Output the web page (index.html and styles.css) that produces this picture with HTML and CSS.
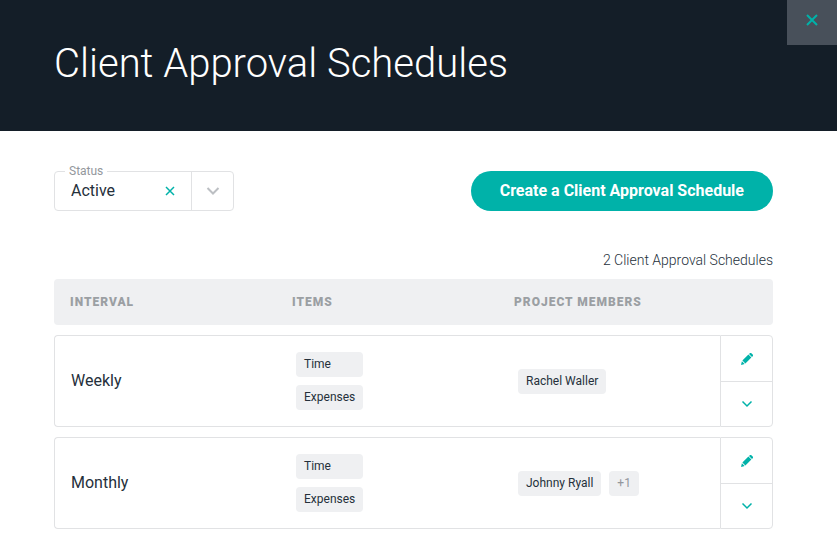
FILE: index.html
```
<!DOCTYPE html>
<html lang="en">
<head>
  <meta charset="utf-8">
  <title>Client Approval Schedules</title>
  <link rel="stylesheet" href="styles.css">
</head>
<body>
  <header class="page-header">
    <h1>Client Approval Schedules</h1>
    <button type="button" class="close" aria-label="Close">
      <svg width="12" height="12" viewBox="0 0 12 12"><path d="M1 1l10 10M11 1L1 11"/></svg>
    </button>
  </header>

  <main class="content">
    <div class="toolbar">
      <div class="filter">
        <label for="status">Status</label>
        <select id="status">
          <option>Active</option>
          <option>Inactive</option>
        </select>
        <button type="button" class="clear" aria-label="Clear status">
          <svg width="10" height="10" viewBox="0 0 10 10"><path d="M1 1l8 8M9 1L1 9"/></svg>
        </button>
        <span class="arrow">
          <svg width="14" height="8" viewBox="0 0 14 8"><path d="M1.500 1l5.500 5.500L12.500 1"/></svg>
        </span>
      </div>
      <button type="button" class="create">Create a Client Approval Schedule</button>
    </div>

    <p class="count">2 Client Approval Schedules</p>

    <table class="schedules">
      <thead>
        <tr>
          <th>Interval</th>
          <th>Items</th>
          <th>Project Members</th>
          <th class="actions-head"></th>
        </tr>
      </thead>
      <tbody>
        <tr>
          <td>Weekly</td>
          <td class="tags">
            <div class="stack">
              <span class="tag">Time</span>
              <span class="tag">Expenses</span>
            </div>
          </td>
          <td class="tags">
            <div class="line">
              <span class="tag">Rachel Waller</span>
            </div>
          </td>
          <td class="actions">
            <button type="button" aria-label="Edit Weekly">
              <svg class="pencil" width="12" height="12" viewBox="0 0 12 12"><path d="M8 1l.8-.7a1.200 1.200 0 0 1 1.600 0l1.300 1.300a1.200 1.200 0 0 1 0 1.600L11 4zM7.400 1.600l3 3-6 6-3-3zM.9 8.300l2.800 2.800L0 12z"/></svg>
            </button>
            <button type="button" aria-label="Expand Weekly">
              <svg class="chevron" width="12" height="8" viewBox="0 0 12 8"><path d="M1.500 1.500L6 6l4.500-4.500"/></svg>
            </button>
          </td>
        </tr>
        <tr>
          <td>Monthly</td>
          <td class="tags">
            <div class="stack">
              <span class="tag">Time</span>
              <span class="tag">Expenses</span>
            </div>
          </td>
          <td class="tags">
            <div class="line">
              <span class="tag">Johnny Ryall</span>
              <span class="tag more">+1</span>
            </div>
          </td>
          <td class="actions">
            <button type="button" aria-label="Edit Monthly">
              <svg class="pencil" width="12" height="12" viewBox="0 0 12 12"><path d="M8 1l.8-.7a1.200 1.200 0 0 1 1.600 0l1.300 1.300a1.200 1.200 0 0 1 0 1.600L11 4zM7.400 1.600l3 3-6 6-3-3zM.9 8.300l2.800 2.800L0 12z"/></svg>
            </button>
            <button type="button" aria-label="Expand Monthly">
              <svg class="chevron" width="12" height="8" viewBox="0 0 12 8"><path d="M1.500 1.500L6 6l4.500-4.500"/></svg>
            </button>
          </td>
        </tr>
      </tbody>
    </table>
  </main>
</body>
</html>
```
FILE: styles.css
```
* {
  box-sizing: border-box;
}

body {
  margin: 0;
  font-family: Roboto, sans-serif;
  font-size: 16px;
  color: #25303b;
  background: #ffffff;
}

button {
  border: 0;
  padding: 0;
  background: none;
  font-family: inherit;
  cursor: pointer;
}

svg {
  display: block;
  fill: none;
  stroke: #00b2a9;
  stroke-width: 2;
}

/* header */

.page-header {
  display: flex;
  justify-content: space-between;
  align-items: flex-start;
  padding-left: 54px;
  background: #141e28;
}

.page-header h1 {
  margin: 0;
  padding: 36px 0 39px;
  font-size: 40px;
  line-height: 56px;
  font-weight: 300;
  color: #ffffff;
}

.close {
  display: flex;
  align-items: center;
  justify-content: center;
  width: 50px;
  height: 45px;
  padding-bottom: 5px;
  background: #48505a;
}

/* filter and create button */

.content {
  padding: 40px 64px 24px 54px;
}

.toolbar {
  display: flex;
  justify-content: space-between;
}

.filter {
  position: relative;
  width: 180px;
  height: 40px;
}

.filter label {
  position: absolute;
  top: -8px;
  left: 11px;
  padding: 0 4px;
  font-size: 12px;
  line-height: 16px;
  color: #93979c;
  background: #ffffff;
}

.filter select {
  width: 100%;
  height: 100%;
  padding: 0 80px 2px 16px;
  border: 1px solid #e1e2e4;
  border-radius: 4px;
  appearance: none;
  background: #ffffff;
  font-family: inherit;
  font-size: 16px;
  color: #25303b;
}

.clear {
  position: absolute;
  top: 10px;
  right: 54px;
  padding: 5px;
}

.clear svg {
  stroke-width: 1.500;
}

.arrow {
  position: absolute;
  top: 1px;
  right: 1px;
  bottom: 1px;
  display: flex;
  align-items: center;
  justify-content: center;
  width: 42px;
  border-left: 1px solid #e1e2e4;
  pointer-events: none;
}

.arrow svg {
  stroke: #bcbfc3;
}

.create {
  height: 40px;
  padding: 0 29px 2px;
  border-radius: 20px;
  font-size: 16px;
  font-weight: 700;
  color: #ffffff;
  background: #00b2a9;
}

.count {
  margin: 39px 0 9px;
  font-size: 14px;
  line-height: 20px;
  font-weight: 300;
  text-align: right;
}

/* table */

.schedules {
  width: 100%;
  margin-top: -10px;
  table-layout: fixed;
  border-collapse: separate;
  border-spacing: 0 10px;
}

.schedules th {
  height: 46px;
  padding: 0 16px;
  font-size: 12px;
  font-weight: 900;
  letter-spacing: 1px;
  text-align: left;
  text-transform: uppercase;
  color: #9b9fa3;
  background: #eff0f2;
}

.schedules th:first-child {
  border-radius: 4px 0 0 4px;
}

.schedules th.actions-head {
  width: 53px;
  border-radius: 0 4px 4px 0;
}

.schedules td {
  height: 92px;
  padding: 0 16px 2px;
  border: 1px solid #e1e2e4;
  border-width: 1px 0;
}

.schedules td:first-child {
  border-left-width: 1px;
  border-radius: 4px 0 0 4px;
}

.schedules td.tags {
  padding: 0 20px;
}

.schedules td.actions {
  padding: 0;
  border-width: 1px;
  border-radius: 0 4px 4px 0;
}

.stack {
  display: inline-grid;
  gap: 8px;
  vertical-align: middle;
}

.line {
  display: flex;
  gap: 8px;
}

.tag {
  padding: 0 8px;
  border-radius: 4px;
  font-size: 12px;
  line-height: 25px;
  background: #eff0f2;
}

.more {
  color: #93979c;
}

.actions button {
  display: flex;
  align-items: center;
  justify-content: center;
  width: 100%;
  height: 45px;
}

.actions button + button {
  border-top: 1px solid #e1e2e4;
}

.pencil {
  fill: #00b2a9;
  stroke: none;
}

.chevron {
  stroke-width: 1.500;
}
```
